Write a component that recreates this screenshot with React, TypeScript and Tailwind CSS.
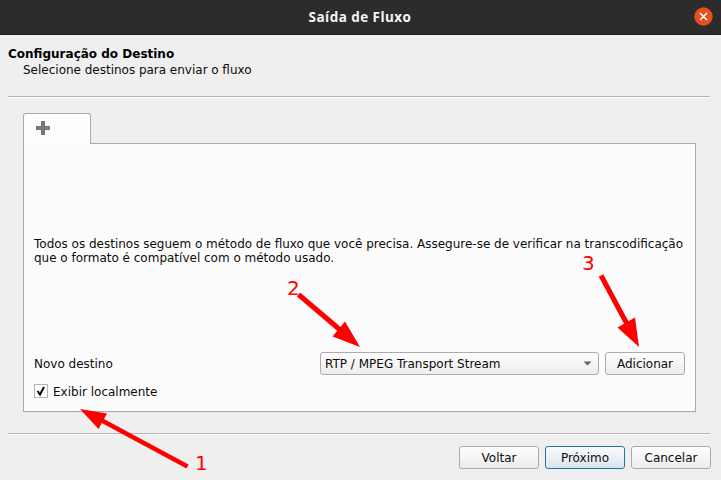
import type { ReactNode } from "react";

function Separator() {
  return <div className="h-[2px] border-b border-b-white bg-[#b4b4b4]" />;
}

function Button({ children, primary = false }: { children: ReactNode; primary?: boolean }) {
  return (
    <button
      className={
        primary
          ? "h-[23px] w-[80px] rounded-[3px] border border-[#2172a5] bg-linear-to-b from-[#fbfcfd] to-[#dce4ec] pt-px text-center leading-[20px]"
          : "h-[23px] w-[80px] rounded-[3px] border border-[#ababab] bg-linear-to-b from-[#fefefe] to-[#ededed] pt-px text-center leading-[20px]"
      }
    >
      {children}
    </button>
  );
}

function Annotations() {
  return (
    <div className="pointer-events-none absolute inset-0 text-[20px] leading-[24px] text-[#ff0000]">
      <svg className="absolute inset-0" width="721" height="480" fill="#ff0000" stroke="#ff0000">
        <path d="M187.500 466.500L101 420" strokeWidth="4.500" />
        <path d="M80 409L107 413.500L98.500 429Z" stroke="none" />
        <path d="M298.500 294.500L342 331.500" strokeWidth="5" />
        <path d="M360 347L345 321.500L332.500 336.500Z" stroke="none" />
        <path d="M601 275.500L627 324" strokeWidth="5" />
        <path d="M639 347L635 317.500L617.500 327.500Z" stroke="none" />
      </svg>
      <span className="absolute left-[195px] top-[451px]">1</span>
      <span className="absolute left-[287px] top-[276px]">2</span>
      <span className="absolute left-[582px] top-[251px]">3</span>
    </div>
  );
}

export default function App() {
  return (
    <div className="relative flex h-[480px] w-[721px] flex-col overflow-hidden bg-[#efefef] font-['DejaVu_Sans',sans-serif] text-[12px] leading-[14px] text-[#0c0c0c]">
      <header className="grid h-[35px] shrink-0 grid-cols-[1fr_auto_1fr] items-center border-b border-[#1f1f1f] bg-[#2c2c2c] pl-[7px] pr-[8px]">
        <span />
        <h1 className="font-['Open_Sans','Noto_Sans',sans-serif] text-[13.5px] font-bold leading-[18px] tracking-[0.45px] text-[#f5f5f3]">
          Saída de Fluxo
        </h1>
        <button className="mt-[-2px] justify-self-end" aria-label="Fechar">
          <svg width="19" height="19" viewBox="0 0 19 19">
            <circle cx="9.500" cy="9.500" r="9.200" fill="#e2501b" />
            <path d="M6 6l7 7M13 6l-7 7" stroke="#fff" strokeWidth="1.500" />
          </svg>
        </button>
      </header>

      <div className="h-[61px] shrink-0 px-2 pt-[12px]">
        <h2 className="font-bold leading-[14px] text-black">Configuração do Destino</h2>
        <p className="pl-[15px] pt-[2px] [word-spacing:-0.1px]">Selecione destinos para enviar o fluxo</p>
      </div>
      <div className="pl-2 pr-[11px]">
        <Separator />
      </div>

      <main className="flex flex-col pl-[23px] pr-[25px] pt-[15px]">
        <div className="z-10 flex h-[31px] w-[68px] rounded-t-[3px] border border-b-0 border-[#ababab] bg-[#fdfdfd] pl-[12px] pt-[7px]">
          <svg width="14" height="14" viewBox="0 0 14 14">
            <path d="M5 0h4v5h5v4h-5v5h-4v-5h-5v-4h5z" fill="#777" />
          </svg>
        </div>
        <section className="-mt-px flex h-[269px] flex-col border border-[#ababab] bg-[#fcfcfc] px-[10px] shadow-[0_1px_0_#e4e4e4]">
          <p className="mt-[93px] h-[28px] whitespace-nowrap [word-spacing:-0.05px]">
            Todos os destinos seguem o método de fluxo que você precisa. Assegure-se de verificar na transcodificação
            <br />
            que o formato é compatível com o método usado.
          </p>
          <div className="mt-[87px] flex h-[23px] items-center">
            <span className="w-[286px]">Novo destino</span>
            <button className="mr-[6px] flex h-[23px] w-[279px] items-center justify-between rounded-[3px] border border-[#ababab] bg-linear-to-b from-[#fefefe] to-[#ededed] pl-[4px] pr-[6px]">
              <span>RTP / MPEG Transport Stream</span>
              <svg width="9" height="5" viewBox="0 0 9 5">
                <path d="M0.500 0.500h8l-4 4z" fill="#606060" />
              </svg>
            </button>
            <Button>Adicionar</Button>
          </div>
          <label className="mt-[9px] flex h-[14px] items-center">
            <span className="mr-[5px] flex h-[14px] w-[14px] items-center justify-center border border-[#b5b5b5] bg-white">
              <svg width="12" height="12" viewBox="0 0 12 12" fill="none" stroke="#080808" strokeWidth="2">
                <path d="M2.500 6l2.500 3.500l4-7.500" />
              </svg>
            </span>
            <span className="pt-[2px]">Exibir localmente</span>
          </label>
        </section>
      </main>

      <div className="mt-[21px] pl-2 pr-[11px]">
        <Separator />
      </div>
      <footer className="mt-[11px] flex justify-end gap-[6px] pr-[10px]">
        <Button>Voltar</Button>
        <Button primary>Próximo</Button>
        <Button>Cancelar</Button>
      </footer>
      <Annotations />
    </div>
  );
}
